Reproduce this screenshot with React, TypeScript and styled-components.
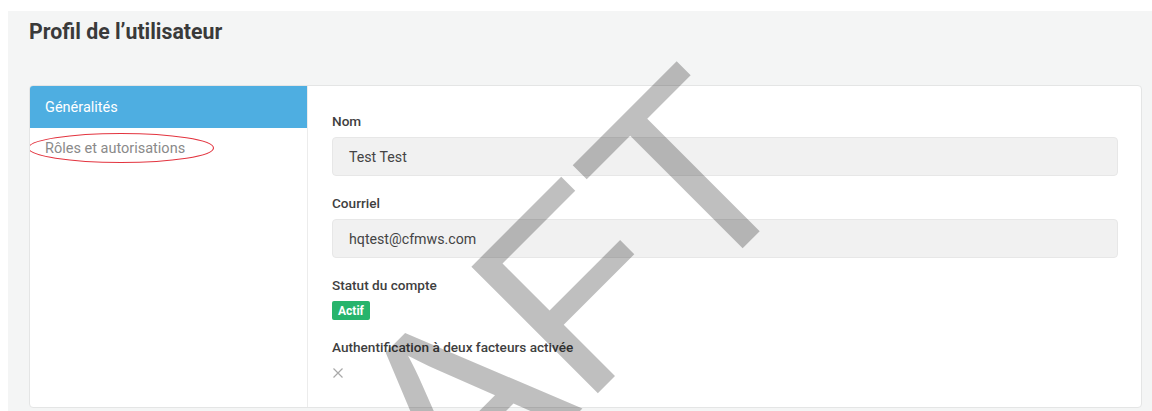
import styled, { createGlobalStyle } from 'styled-components';

const GlobalStyle = createGlobalStyle`
  html,
  body {
    margin: 0;
    background: #ffffff;
    overflow: hidden;
  }

  body {
    font-family: Roboto, 'Liberation Sans', Arial, sans-serif;
    color: #444444;
  }
`;

interface NavEntry {
  key: string;
  label: string;
}

const navEntries: NavEntry[] = [
  { key: 'general', label: 'Généralités' },
  { key: 'roles', label: 'Rôles et autorisations' },
];

function App() {
  return (
    <>
      <GlobalStyle />
      <Page>
        <Panel>
          <Title>Profil de l’utilisateur</Title>
          <Card>
            <Sidebar>
              {navEntries.map((entry) => (
                <NavItem key={entry.key} $active={entry.key === 'general'}>
                  {entry.label}
                </NavItem>
              ))}
              <Highlight width="190" height="32" viewBox="0 0 190 32">
                <ellipse cx="95" cy="16" rx="92.5" ry="14.5" fill="none" stroke="#e3343f" strokeWidth="1.1" />
              </Highlight>
            </Sidebar>
            <Content>
              <Field>
                <Label>Nom</Label>
                <ReadOnlyInput>Test Test</ReadOnlyInput>
              </Field>
              <Field>
                <Label>Courriel</Label>
                <ReadOnlyInput>hqtest@cfmws.com</ReadOnlyInput>
              </Field>
              <Field>
                <Label>Statut du compte</Label>
                <Badge>Actif</Badge>
              </Field>
              <Field>
                <Label>Authentification à deux facteurs activée</Label>
                <FlagIcon>
                  <svg width="10" height="10" viewBox="0 0 10 10">
                    <path d="M0.5 0.5 L9.5 9.5 M9.5 0.5 L0.5 9.5" stroke="#a9a9a9" strokeWidth="1.2" fill="none" />
                  </svg>
                </FlagIcon>
              </Field>
            </Content>
          </Card>
        </Panel>
      </Page>
      <Watermark width="1152" height="411" viewBox="0 0 1152 411">
        <text
          x="501"
          y="490"
          textAnchor="middle"
          transform="rotate(-45 501 490)"
          fontFamily="'Liberation Sans', Arial, sans-serif"
          fontSize="260"
          fill="rgba(0, 0, 0, 0.25)"
        >
          DRAFT
        </text>
      </Watermark>
    </>
  );
}

export default App;

const Page = styled.div`
  padding: 11px 0 0 8px;
  height: 411px;
  box-sizing: border-box;
`;

const Panel = styled.div`
  background: #f4f5f5;
  height: 100%;
  box-sizing: border-box;
  padding: 9px 10px 0 21px;
`;

const Title = styled.h1`
  margin: 0 0 41px;
  font-size: 21.3px;
  line-height: 24px;
  font-weight: 700;
  color: #3a3a3a;
`;

const Card = styled.div`
  display: flex;
  background: #ffffff;
  border: 1px solid #e4e5e5;
  border-radius: 4px;
  overflow: hidden;
`;

const Sidebar = styled.nav`
  position: relative;
  width: 277px;
  flex-shrink: 0;
  border-right: 1px solid #ececec;
`;

const NavItem = styled.div<{ $active?: boolean }>`
  display: flex;
  align-items: center;
  height: ${({ $active }) => ($active ? '42px' : '40px')};
  padding-left: 15px;
  font-size: 14.5px;
  color: ${({ $active }) => ($active ? '#ffffff' : '#8a8a8a')};
  background: ${({ $active }) => ($active ? '#4eaee1' : 'transparent')};
`;

const Highlight = styled.svg`
  position: absolute;
  left: -4px;
  top: 46px;
  pointer-events: none;
`;

const Content = styled.div`
  flex: 1;
  display: flex;
  flex-direction: column;
  gap: 17px;
  padding: 25px 23px 24px 24px;
`;

const Field = styled.div`
  display: flex;
  flex-direction: column;
  align-items: flex-start;
  gap: 6px;
`;

const Label = styled.div`
  font-size: 13.6px;
  line-height: 20px;
  font-weight: 500;
  color: #3f3f3f;
`;

const ReadOnlyInput = styled.div`
  align-self: stretch;
  display: flex;
  align-items: center;
  height: 39px;
  box-sizing: border-box;
  padding: 0 16px;
  background: #f1f1f1;
  border: 1px solid #e7e7e7;
  border-radius: 4px;
  font-size: 14.2px;
  color: #444444;
`;

const Badge = styled.span`
  display: inline-flex;
  align-items: center;
  height: 19px;
  padding: 0 6px;
  border-radius: 2px;
  background: #27b46c;
  color: #ffffff;
  font-size: 12px;
  font-weight: 700;
`;

const FlagIcon = styled.div`
  display: flex;
  align-items: center;
  height: 20px;
  padding-left: 1px;
`;

const Watermark = styled.svg`
  position: fixed;
  left: 0;
  top: 0;
  pointer-events: none;
`;
